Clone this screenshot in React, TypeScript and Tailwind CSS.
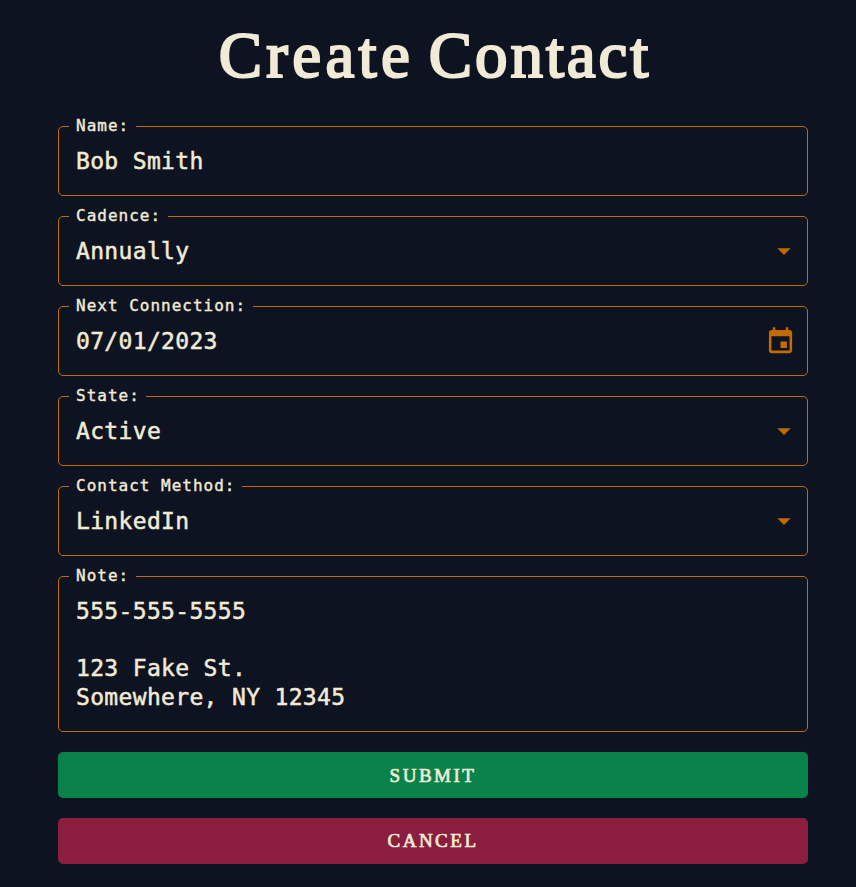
import type { ReactNode } from 'react';

function Field({ label, icon, children, tall = false }: { label: string; icon?: ReactNode; children: ReactNode; tall?: boolean }) {
  return (
    <fieldset
      className={`${tall ? 'h-[165px]' : 'h-[79px]'} min-w-0 rounded-[5px] border border-[#c36a00] pl-2.5 pr-2.5`}
    >
      <legend className="h-[18px] pl-[7px] pr-[6.5px] text-[16px] font-normal leading-[17px] tracking-[1px] [-webkit-text-stroke:0.4px_#f1ead6]">
        {label}
      </legend>
      <div className="flex items-start justify-between pl-[7px] pt-[9px]">
        <div className="mt-[3px] whitespace-pre text-[23px] leading-[28.7px] tracking-[0.33px] [-webkit-text-stroke:0.5px_#f1ead6]">
          {children}
        </div>
        {icon}
      </div>
    </fieldset>
  );
}

function Caret() {
  return (
    <svg className="-mr-[3px] mt-[1px] h-8 w-8 fill-[#c36a00]" viewBox="0 0 24 24">
      <path d="M7 10l5 5 5-5z" />
    </svg>
  );
}

function Calendar() {
  return (
    <svg className="mr-px mt-0.5 h-[31px] w-[31px] fill-[#c36a00]" viewBox="0 0 24 24">
      <path d="M17 12h-5v5h5v-5zM16 1v2H8V1H6v2H5c-1.11 0-1.99.9-1.99 2L3 19c0 1.1.89 2 2 2h14c1.1 0 2-.9 2-2V5c0-1.1-.9-2-2-2h-1V1h-2zm3 18H5V8h14v11z" />
    </svg>
  );
}

export default function App() {
  return (
    <main className="min-h-screen bg-[#0d1320] pl-[58px] pr-12 font-['DejaVu_Sans_Mono',monospace] text-[#f1ead6]">
      <h1 className="h-[117px] whitespace-nowrap pl-1 pt-[17px] text-center font-['Liberation_Serif',serif] text-[65px] leading-[76px] [-webkit-text-stroke:2.2px_#f1ead6]">
        <span className="tracking-[4.3px]">Create</span>
        <span className="tracking-[-1.5px]"> </span>
        <span className="tracking-[2.9px]">Contact</span>
      </h1>
      <form className="flex flex-col" onSubmit={(e) => e.preventDefault()}>
        <div className="flex flex-col gap-[11px]">
          <Field label="Name:">Bob Smith</Field>
          <Field label="Cadence:" icon={<Caret />}>Annually</Field>
          <Field label="Next Connection:" icon={<Calendar />}>07/01/2023</Field>
          <Field label="State:" icon={<Caret />}>Active</Field>
          <Field label="Contact Method:" icon={<Caret />}>LinkedIn</Field>
          <Field label="Note:" tall>{'555-555-5555\n\n123 Fake St.\nSomewhere, NY 12345'}</Field>
        </div>
        <div className="mt-5 flex flex-col gap-5 font-['Liberation_Serif',serif] text-[19px] tracking-[2.5px] [-webkit-text-stroke:0.7px_#f1ead6]">
          <button type="submit" className="h-[46px] rounded-[5px] bg-[#098249] pt-0.5">SUBMIT</button>
          <button type="button" className="h-[46px] rounded-[5px] bg-[#8b1e3f]">CANCEL</button>
        </div>
      </form>
    </main>
  );
}
